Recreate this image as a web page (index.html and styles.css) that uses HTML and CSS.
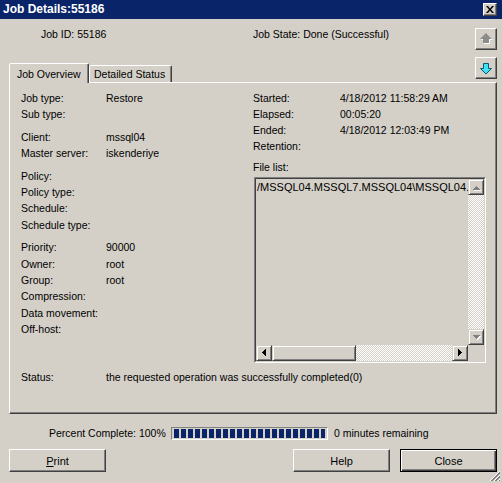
FILE: index.html
```html
<!DOCTYPE html>
<html>
<head>
<meta charset="utf-8">
<title>Job Details:55186</title>
<link rel="stylesheet" href="styles.css">
</head>
<body>
<div class="window">
  <div class="titlebar">
    <span class="title">Job Details:55186</span>
    <span class="tb-close">
      <svg width="8" height="7" viewBox="0 0 8 7"><path d="M0 0h2l2 2.4L6 0h2L5 3.5 8 7H6L4 4.6 2 7H0l3-3.5z" fill="#000"/></svg>
    </span>
  </div>

  <div class="header">
    <div class="header-main">
      <div class="job-info">
        <span class="job-id">Job ID: 55186</span>
        <span class="job-state">Job State: Done (Successful)</span>
      </div>
      <div class="tabs">
        <div class="tab active">Job Overview</div>
        <div class="tab">Detailed Status</div>
      </div>
    </div>
    <div class="nav-buttons">
      <div class="nav-btn">
        <svg width="20" height="20" viewBox="0 0 20 20">
          <path d="M11 5L17 11H14V15H8V11H5Z" fill="#fff"/>
          <path d="M10 4L16 10H13V14H7V10H4Z" fill="#8c8c8c"/>
        </svg>
      </div>
      <div class="nav-btn">
        <svg width="20" height="20" viewBox="0 0 20 20">
          <path d="M7.5 5.5H12.5V10.5H15.5L10 16L4.5 10.5H7.5Z" fill="#3fe4f0" stroke="#0b5a78" stroke-width="1"/>
        </svg>
      </div>
    </div>
  </div>

  <div class="panel">
    <div class="columns">
      <div class="col-left">
        <div class="group">
          <div class="row"><span class="label">Job type:</span><span class="value">Restore</span></div>
          <div class="row"><span class="label">Sub type:</span><span class="value"></span></div>
        </div>
        <div class="group">
          <div class="row"><span class="label">Client:</span><span class="value">mssql04</span></div>
          <div class="row"><span class="label">Master server:</span><span class="value">iskenderiye</span></div>
        </div>
        <div class="group">
          <div class="row"><span class="label">Policy:</span><span class="value"></span></div>
          <div class="row"><span class="label">Policy type:</span><span class="value"></span></div>
          <div class="row"><span class="label">Schedule:</span><span class="value"></span></div>
          <div class="row"><span class="label">Schedule type:</span><span class="value"></span></div>
        </div>
        <div class="group">
          <div class="row"><span class="label">Priority:</span><span class="value">90000</span></div>
          <div class="row"><span class="label">Owner:</span><span class="value">root</span></div>
          <div class="row"><span class="label">Group:</span><span class="value">root</span></div>
          <div class="row"><span class="label">Compression:</span><span class="value"></span></div>
          <div class="row"><span class="label">Data movement:</span><span class="value"></span></div>
          <div class="row"><span class="label">Off-host:</span><span class="value"></span></div>
        </div>
      </div>

      <div class="col-right">
        <div class="rrow"><span class="rlabel">Started:</span><span class="value">4/18/2012 11:58:29 AM</span></div>
        <div class="rrow"><span class="rlabel">Elapsed:</span><span class="value">00:05:20</span></div>
        <div class="rrow"><span class="rlabel">Ended:</span><span class="value">4/18/2012 12:03:49 PM</span></div>
        <div class="rrow"><span class="rlabel">Retention:</span><span class="value"></span></div>
        <div class="filelist-label">File list:</div>
        <div class="listbox">
          <div class="listbox-inner">
            <div class="list-content">/MSSQL04.MSSQL7.MSSQL04\MSSQL04.</div>
            <div class="vscroll">
              <div class="sbtn">
                <svg width="14" height="14" viewBox="0 0 14 14"><path d="M7 6h1v1H7zM6 7h3v1H6zM5 8h5v1H5zM4 9h7v1H4z" fill="#fff" transform="translate(1 1)"/><path d="M7 6h1v1H7zM6 7h3v1H6zM5 8h5v1H5zM4 9h7v1H4z" fill="#808080"/></svg>
              </div>
              <div class="strack"></div>
              <div class="sbtn">
                <svg width="14" height="14" viewBox="0 0 14 14"><path d="M4 5h7v1H4zM5 6h5v1H5zM6 7h3v1H6zM7 8h1v1H7z" fill="#fff" transform="translate(1 1)"/><path d="M4 5h7v1H4zM5 6h5v1H5zM6 7h3v1H6zM7 8h1v1H7z" fill="#808080"/></svg>
              </div>
            </div>
            <div class="hscroll">
              <div class="sbtn">
                <svg width="14" height="14" viewBox="0 0 14 14"><path d="M5 6h1v1H5zM6 5h1v3H6zM7 4h1v5H7zM8 3h1v7H8z" fill="#000"/></svg>
              </div>
              <div class="sthumb"></div>
              <div class="strack"></div>
              <div class="sbtn">
                <svg width="14" height="14" viewBox="0 0 14 14"><path d="M5 3h1v7H5zM6 4h1v5H6zM7 5h1v3H7zM8 6h1v1H8z" fill="#000"/></svg>
              </div>
            </div>
            <div class="scorner"></div>
          </div>
        </div>
      </div>
    </div>
    <div class="status-row"><span class="label">Status:</span><span class="value">the requested operation was successfully completed(0)</span></div>
  </div>

  <div class="progress-row">
    <span class="pc-label">Percent Complete: 100%</span>
    <div class="bar"><div class="bar-fill"></div></div>
    <span class="remaining">0 minutes remaining</span>
  </div>

  <div class="button-row">
    <div class="btn"><span><u>P</u>rint</span></div>
    <div class="btn help">Help</div>
    <div class="btn close default">Close</div>
  </div>

  <svg class="grip" width="12" height="12" viewBox="0 0 12 12">
    <g stroke-width="1" shape-rendering="crispEdges">
      <line x1="11" y1="1" x2="1" y2="11" stroke="#fff"/>
      <line x1="11" y1="2" x2="2" y2="11" stroke="#808080"/>
      <line x1="11" y1="3" x2="3" y2="11" stroke="#808080"/>
      <line x1="11" y1="5" x2="5" y2="11" stroke="#fff"/>
      <line x1="11" y1="6" x2="6" y2="11" stroke="#808080"/>
      <line x1="11" y1="7" x2="7" y2="11" stroke="#808080"/>
      <line x1="11" y1="9" x2="9" y2="11" stroke="#fff"/>
      <line x1="11" y1="10" x2="10" y2="11" stroke="#808080"/>
    </g>
  </svg>
</div>
</body>
</html>
```

FILE: styles.css
```css
* { box-sizing: border-box; margin: 0; padding: 0; }

html, body {
  width: 502px;
  height: 483px;
  overflow: hidden;
  background: #d4d0c8;
}

body {
  font-family: "Liberation Sans", Arial, sans-serif;
  font-size: 10.5px;
  color: #000;
}

.window {
  width: 502px;
  height: 483px;
  background: #d4d0c8;
  display: flex;
  flex-direction: column;
  position: relative;
}

/* Title bar */
.titlebar {
  height: 19px;
  background: #0a246a;
  display: flex;
  align-items: center;
  justify-content: space-between;
  padding: 0 5px 0 3px;
}

.title {
  color: #fff;
  font-weight: bold;
  font-size: 12px;
  line-height: 19px;
}

.tb-close {
  width: 14px;
  height: 13px;
  background: #d4d0c8;
  border: 1px solid;
  border-color: #fff #404040 #404040 #fff;
  box-shadow: inset -1px -1px 0 #808080;
  display: flex;
  align-items: center;
  justify-content: center;
}

.tb-close svg { display: block; margin: 0 1px 1px 0; }

/* Header */
.header {
  display: flex;
  height: 63px;
}

.header-main {
  flex: 1;
  display: flex;
  flex-direction: column;
  padding-left: 9px;
}

.job-info {
  display: flex;
  margin-top: 7px;
  line-height: 16px;
  padding-left: 32px;
}

.job-id { width: 212px; }

.tabs {
  display: flex;
  align-items: flex-end;
  margin-top: auto;
  margin-bottom: -1px;
  position: relative;
  z-index: 1;
}

.tab {
  height: 17px;
  width: 83px;
  margin-bottom: 1px;
  background: #d4d0c8;
  border: 1px solid;
  border-bottom: none;
  border-color: #fff #404040 transparent #fff;
  border-radius: 2px 2px 0 0;
  box-shadow: inset -1px 0 0 #808080;
  padding-left: 4px;
  line-height: 16px;
  white-space: nowrap;
}

.tab.active {
  height: 20px;
  width: 80px;
  margin-bottom: 0;
  padding-left: 7px;
  line-height: 20px;
}

/* nav buttons */
.nav-buttons {
  display: flex;
  flex-direction: column;
  gap: 7px;
  margin: 9px 5px 0 0;
}

.nav-btn {
  width: 22px;
  height: 22px;
  background: #d4d0c8;
  border: 1px solid;
  border-color: #fff #404040 #404040 #fff;
  box-shadow: inset -1px -1px 0 #808080;
}

.nav-btn svg { display: block; }

/* Panel */
.panel {
  margin: 0 5px 0 9px;
  height: 332px;
  border: 1px solid;
  border-color: #fff #404040 #404040 #fff;
  box-shadow: inset -1px -1px 0 #808080;
  padding: 7px 0 0 11px;
}

.columns { display: flex; }

.col-left { width: 232px; }

.group + .group { margin-top: 6px; }

.row {
  display: flex;
  line-height: 16.4px;
  height: 16.4px;
  white-space: nowrap;
}

.label { width: 85px; flex: none; }

.col-right { width: 233px; }

.rrow {
  display: flex;
  line-height: 16px;
  height: 16px;
  white-space: nowrap;
}

.rlabel { width: 87px; flex: none; }

.filelist-label {
  margin-top: 5px;
  line-height: 16px;
}

.listbox {
  margin: 2px 0 0 1px;
  width: 232px;
  height: 186px;
  border: 1px solid;
  border-color: #808080 #fff #fff #808080;
}

.listbox-inner {
  width: 100%;
  height: 100%;
  border: 1px solid;
  border-color: #404040 #d4d0c8 #d4d0c8 #404040;
  display: grid;
  grid-template-columns: 1fr 16px;
  grid-template-rows: 1fr 16px;
  background: #d4d0c8;
}

.list-content {
  overflow: hidden;
  white-space: nowrap;
  line-height: 16px;
  font-size: 11px;
  padding-left: 1px;
}

.vscroll {
  display: flex;
  flex-direction: column;
}

.hscroll {
  display: flex;
}

.sbtn {
  width: 16px;
  height: 16px;
  flex: none;
  background: #d4d0c8;
  border: 1px solid;
  border-color: #d4d0c8 #404040 #404040 #d4d0c8;
  box-shadow: inset 1px 1px 0 #fff, inset -1px -1px 0 #808080;
}

.sbtn svg { display: block; }

.strack {
  flex: 1;
  background-color: #fff;
  background-image: conic-gradient(#fff 25%, #d4d0c8 0 50%, #fff 0 75%, #d4d0c8 0);
  background-size: 2px 2px;
}

.sthumb {
  width: 84px;
  flex: none;
  background: #d4d0c8;
  border: 1px solid;
  border-color: #d4d0c8 #404040 #404040 #d4d0c8;
  box-shadow: inset 1px 1px 0 #fff, inset -1px -1px 0 #808080;
}

.scorner { background: #d4d0c8; }

.status-row {
  display: flex;
  margin-top: 6px;
  line-height: 16px;
  white-space: nowrap;
}

/* Progress */
.progress-row {
  display: flex;
  align-items: center;
  height: 16px;
  margin-top: 11px;
  padding-left: 49px;
  white-space: nowrap;
}

.pc-label { width: 122px; flex: none; }

.bar {
  width: 157px;
  height: 13px;
  flex: none;
  margin-right: 6px;
  border: 1px solid;
  border-color: #808080 #fff #fff #808080;
  padding: 1px 2px 1px 2px;
}

.bar-fill {
  width: 100%;
  height: 100%;
  background: repeating-linear-gradient(90deg, #0a246a 0 5px, #d4d0c8 5px 7px);
}

/* Buttons */
.button-row {
  display: flex;
  margin-top: 8px;
  padding: 0 5px 0 9px;
}

.btn {
  width: 97px;
  height: 23px;
  background: #d4d0c8;
  border: 1px solid;
  border-color: #fff #404040 #404040 #fff;
  box-shadow: inset -1px -1px 0 #808080;
  display: flex;
  align-items: center;
  justify-content: center;
  font-size: 11px;
}

.btn.help { margin-left: auto; }

.btn.close { margin-left: 10px; }

.btn.default {
  border: 1px solid #000;
  box-shadow: inset 1px 1px 0 #fff, inset -1px -1px 0 #404040, inset -2px -2px 0 #808080;
}

.grip {
  position: absolute;
  right: 1px;
  bottom: 1px;
}
```
